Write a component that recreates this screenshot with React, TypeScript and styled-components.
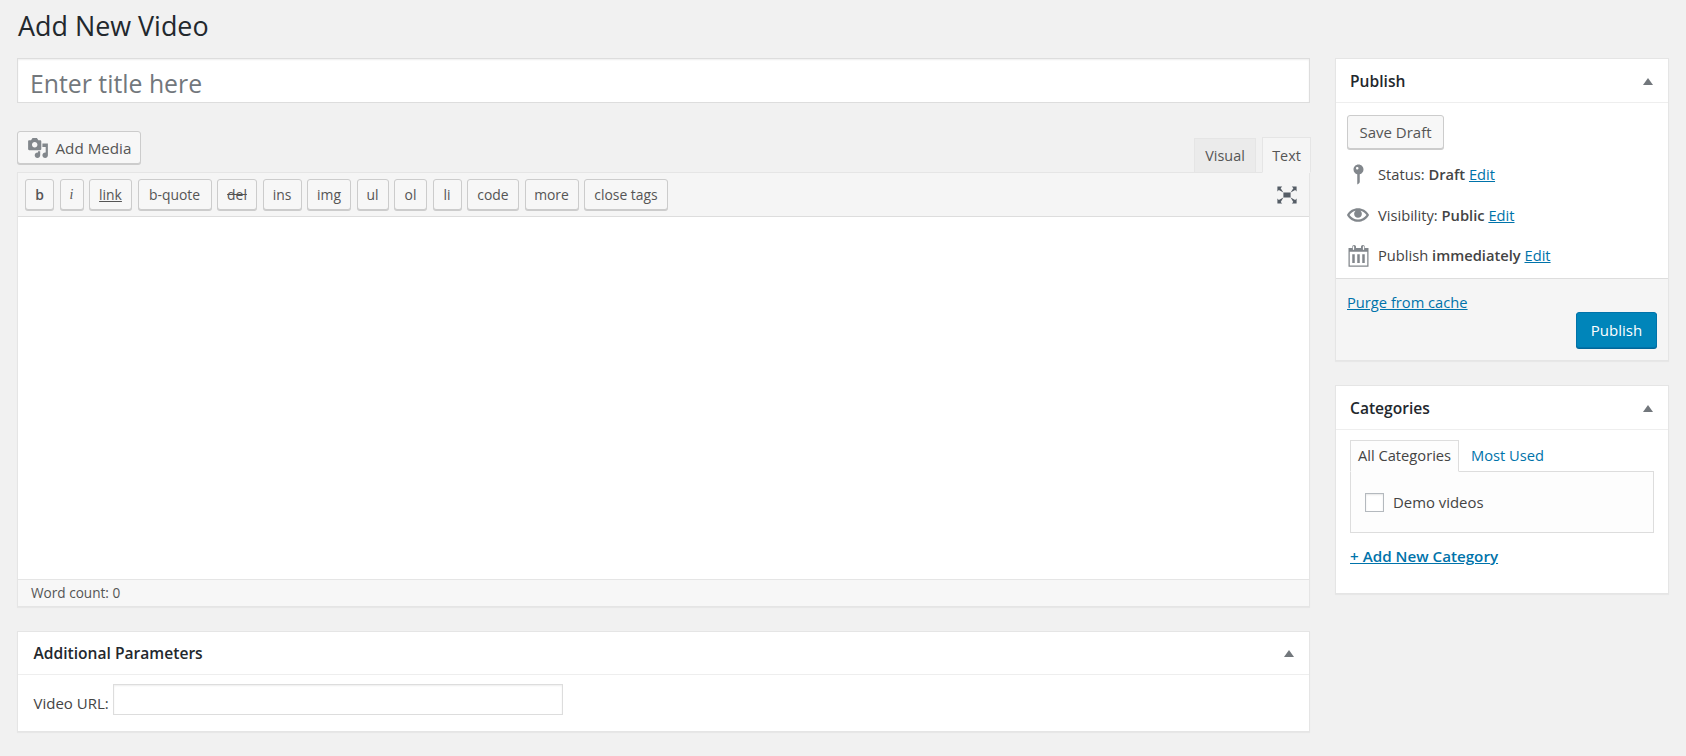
import React from "react";
import styled, { createGlobalStyle } from "styled-components";

const Global = createGlobalStyle`
  html, body { margin: 0; padding: 0; background: #f1f1f1; }
  body { font-family: "Open Sans", "Liberation Sans", sans-serif; font-size: 14.7px; color: #444; }
  * { box-sizing: border-box; }
`;

const Page = styled.div`
  width: 1686px;
  height: 756px;
  padding: 0 17px;
  overflow: hidden;
`;
const Heading = styled.h1`
  margin: 0;
  height: 58px;
  padding: 8px 0 0 1px;
  font-size: 26.9px;
  line-height: 36px;
  font-weight: 400;
  color: #23282d;
`;
const Columns = styled.div`
  display: grid;
  grid-template-columns: 1293px 334px;
  column-gap: 25px;
  align-items: start;
`;
const MainCol = styled.div`
  display: flex;
  flex-direction: column;
`;
const SideCol = styled.div`
  display: flex;
  flex-direction: column;
  gap: 24px;
`;
const TitleField = styled.div`
  height: 45px;
  background: #fff;
  border: 1px solid #ddd;
  padding-left: 12px;
  font-size: 24.8px;
  line-height: 48px;
  color: #72777c;
  box-shadow: inset 0 1px 2px rgba(0,0,0,.07);
`;
const EditorTools = styled.div`
  height: 69px;
  display: flex;
  justify-content: space-between;
  align-items: flex-end;
`;
const MediaButton = styled.div`
  width: 124px;
  height: 33px;
  margin-bottom: 8px;
  display: flex;
  align-items: center;
  gap: 6.5px;
  padding-left: 9px;
  background: #f7f7f7;
  border: 1px solid #ccc;
  border-radius: 3px;
  box-shadow: 0 1px 0 #ccc;
  color: #555;
  font-size: 15.2px;
`;
const Tabs = styled.div`
  display: flex;
  gap: 6px;
  margin-right: -1px;
  margin-bottom: -1px;
  position: relative;
  z-index: 1;
`;
const Tab = styled.div<{ $active?: boolean; $w: number }>`
  width: ${p => p.$w}px;
  height: ${p => (p.$active ? 36 : 35)}px;
  margin-top: ${p => (p.$active ? 0 : 1)}px;
  display: flex;
  align-items: center;
  justify-content: center;
  font-size: 14.4px;
  color: #555;
  background: ${p => (p.$active ? "#f5f5f5" : "#ebebeb")};
  border: 1px solid #e5e5e5;
  border-bottom-color: ${p => (p.$active ? "#f5f5f5" : "#e5e5e5")};
`;
const Editor = styled.div`
  border: 1px solid #e5e5e5;
  box-shadow: 0 1px 1px rgba(0,0,0,.04);
`;
const Toolbar = styled.div`
  height: 44px;
  display: flex;
  align-items: flex-start;
  gap: 5.5px;
  padding: 6px 7px 0;
  background: #f5f5f5;
  border-bottom: 1px solid #ddd;
  position: relative;
`;
const ToolButton = styled.div<{ $w: number }>`
  width: ${p => p.$w}px;
  height: 31px;
  display: flex;
  align-items: center;
  justify-content: center;
  background: #f7f7f7;
  border: 1px solid #ccc;
  border-radius: 3px;
  box-shadow: 0 1px 0 #ccc;
  font-size: 13.9px;
  color: #555;
`;
const Bold = styled.span`font-weight: 600;`;
const Italic = styled.span`font-style: italic; font-family: "Liberation Serif", serif;`;
const Under = styled.span`text-decoration: underline;`;
const Strike = styled.span`text-decoration: line-through;`;
const FullScreen = styled.span`
  position: absolute;
  right: 10px;
  top: 10px;
  width: 24px;
  height: 24px;
  color: #555d66;
`;
const EditorBody = styled.div`
  height: 362px;
  background: #fff;
`;
const WordCount = styled.div`
  height: 27px;
  padding: 0 0 2px 13px;
  display: flex;
  align-items: center;
  font-size: 13.6px;
  color: #555;
  background: #f7f7f7;
  border-top: 1px solid #e5e5e5;
`;
const Box = styled.section<{ $h?: number }>`
  background: #fff;
  border: 1px solid #e5e5e5;
  box-shadow: 0 1px 1px rgba(0,0,0,.04);
  ${p => (p.$h ? `height: ${p.$h}px;` : "")}
  display: flex;
  flex-direction: column;
`;
const BottomBox = styled(Box)`
  margin-top: 24px;
`;
const BoxHead = styled.header<{ $pad?: number; $h?: number }>`
  height: ${p => p.$h ?? 44}px;
  flex: none;
  display: flex;
  align-items: center;
  justify-content: space-between;
  padding: 0 15px 0 ${p => p.$pad ?? 14}px;
  border-bottom: 1px solid #eee;
`;
const BoxTitle = styled.h2`
  margin: 0;
  font-size: 15.6px;
  font-weight: 600;
  color: #23282d;
`;
const Caret = styled.span`
  width: 0;
  height: 0;
  margin-top: 1px;
  border-left: 5px solid transparent;
  border-right: 5px solid transparent;
  border-bottom: 7px solid #72777c;
`;
const UrlRow = styled.div`
  display: flex;
  align-items: flex-start;
  gap: 4px;
  padding: 9px 0 0 15.5px;
`;
const UrlLabel = styled.label`
  width: 75.5px;
  white-space: nowrap;
  font-size: 15px;
  line-height: 22px;
  padding-top: 8px;
`;
const UrlInput = styled.div`
  width: 450px;
  height: 31px;
  background: #fff;
  border: 1px solid #ddd;
  box-shadow: inset 0 1px 2px rgba(0,0,0,.07);
`;
const PublishBody = styled.div`
  height: 175px;
  padding: 12px 11px 0;
  display: flex;
  flex-direction: column;
`;
const SaveDraft = styled.div`
  width: 97px;
  height: 34px;
  display: flex;
  align-items: center;
  justify-content: center;
  background: #f7f7f7;
  border: 1px solid #ccc;
  border-radius: 3px;
  box-shadow: 0 1px 0 #ccc;
  color: #555;
  font-size: 15px;
`;
const Meta = styled.div<{ $top: number }>`
  margin-top: ${p => p.$top}px;
  height: 22px;
  display: flex;
  align-items: center;
  gap: 9px;
  b { font-weight: 600; }
`;
const MetaIcon = styled.span`
  flex: none;
  width: 22px;
  height: 22px;
  display: flex;
  align-items: center;
  justify-content: center;
  color: #82878c;
  svg { flex: none; }
`;
const A = styled.a`
  color: #0073aa;
  text-decoration: underline;
`;
const PurgeLink = styled(A)`
  display: block;
  line-height: 20px;
`;
const PublishFooter = styled.div`
  height: 82px;
  background: #f5f5f5;
  border-top: 1px solid #ddd;
  padding: 13px 11px 0;
  display: flex;
  flex-direction: column;
`;
const PublishButton = styled.div`
  align-self: flex-end;
  width: 81px;
  height: 36px;
  display: flex;
  align-items: center;
  justify-content: center;
  background: #0085ba;
  border: 1px solid #0073aa;
  border-radius: 3px;
  box-shadow: 0 1px 0 #006799;
  color: #fff;
  font-size: 15px;
`;
const CatBody = styled.div`
  padding: 10px 14px 0;
  height: 163px;
`;
const CatTabs = styled.div`
  display: flex;
  height: 32px;
  position: relative;
  z-index: 1;
`;
const CatTab = styled.div<{ $active?: boolean }>`
  height: 32px;
  padding-bottom: 2px;
  display: flex;
  align-items: center;
  ${p => p.$active
    ? `width: 109px; justify-content: center; background: #fdfdfd; border: 1px solid #ddd; border-bottom-color: #fdfdfd; color: #444;`
    : `margin-left: 12px; color: #0073aa;`}
`;
const CatPanel = styled.div`
  margin-top: -1px;
  width: 304px;
  height: 62px;
  background: #fdfdfd;
  border: 1px solid #ddd;
  display: flex;
  align-items: center;
  padding: 0 0 0 14px;
  gap: 9px;
  font-size: 14.9px;
`;
const Check = styled.span`
  width: 19px;
  height: 19px;
  background: #fff;
  border: 1px solid #b4b9be;
  box-shadow: inset 0 1px 2px rgba(0,0,0,.1);
`;
const AddCat = styled(A)`
  display: block;
  margin-top: 12px;
  line-height: 22px;
  font-weight: 600;
  font-size: 15.2px;
`;

const App = () => {
  const tools: [number, React.ReactNode][] = [
    [29, <Bold>b</Bold>],
    [24, <Italic>i</Italic>],
    [43, <Under>link</Under>],
    [74, "b-quote"],
    [40, <Strike>del</Strike>],
    [39, "ins"],
    [44, "img"],
    [32, "ul"],
    [33, "ol"],
    [29, "li"],
    [52, "code"],
    [54, "more"],
    [84, "close tags"],
  ];
  return (
    <Page>
      <Global />
      <Heading>Add New Video</Heading>
      <Columns>
        <MainCol>
          <TitleField>Enter title here</TitleField>
          <EditorTools>
            <MediaButton>
              <svg width="22" height="22" viewBox="0 0 20 20" fill="#82878c"><path d="M13 11V4c0-.55-.45-1-1-1h-1.67L9 1H5L3.67 3H2c-.55 0-1 .45-1 1v7c0 .55.45 1 1 1h10c.55 0 1-.45 1-1zM7 4.5c1.38 0 2.5 1.12 2.5 2.5S8.38 9.5 7 9.5 4.5 8.38 4.5 7 5.62 4.5 7 4.5zM14 6h5v10.5c0 1.38-1.12 2.5-2.5 2.5S14 17.88 14 16.5s1.12-2.5 2.5-2.5c.17 0 .34.02.5.05V9h-3V6zm-4 8.05V13h2v3.5c0 1.38-1.12 2.5-2.5 2.5S7 17.88 7 16.5 8.12 14 9.5 14c.17 0 .34.02.5.05z"/></svg>
              Add Media
            </MediaButton>
            <Tabs>
              <Tab $w={62}>Visual</Tab>
              <Tab $w={49} $active>Text</Tab>
            </Tabs>
          </EditorTools>
          <Editor>
            <Toolbar>
              {tools.map(([w, c], i) => <ToolButton key={i} $w={w}>{c}</ToolButton>)}
              <FullScreen>
                <svg width="24" height="24" viewBox="0 0 20 20" fill="currentColor"><path d="M7 8h6v4H7zm-5 5v4h4l-1.2-1.2L7 12l-3.8 2.2M14 17h4v-4l-1.2 1.2L13 12l2.2 3.8M14 3l1.3 1.3L13 8l3.8-2.2L18 7V3M6 3H2v4l1.2-1.2L7 8 4.7 4.3"/></svg>
              </FullScreen>
            </Toolbar>
            <EditorBody />
            <WordCount>Word count: 0</WordCount>
          </Editor>
          <BottomBox $h={101}>
            <BoxHead $pad={15.5} $h={43}><BoxTitle>Additional Parameters</BoxTitle><Caret /></BoxHead>
            <UrlRow>
              <UrlLabel>Video URL:</UrlLabel>
              <UrlInput />
            </UrlRow>
          </BottomBox>
        </MainCol>
        <SideCol>
          <Box>
            <BoxHead><BoxTitle>Publish</BoxTitle><Caret /></BoxHead>
            <PublishBody>
              <SaveDraft>Save Draft</SaveDraft>
              <Meta $top={14}>
                <MetaIcon><svg width="25" height="25" viewBox="0 0 20 20" fill="currentColor"><path d="M14 6c0 1.86-1.28 3.41-3 3.86V16c0 1-2 2-2 2V9.86c-1.72-.45-3-2-3-3.86 0-2.21 1.79-4 4-4s4 1.79 4 4zM8 5c0 .55.45 1 1 1s1-.45 1-1-.45-1-1-1-1 .45-1 1z"/></svg></MetaIcon>
                <span>Status: <b>Draft</b> <A>Edit</A></span>
              </Meta>
              <Meta $top={19}>
                <MetaIcon><svg width="22" height="22" viewBox="0 0 20 20" fill="currentColor"><path d="M19.7 9.4C17.7 6 14 3.9 10 3.9S2.3 6 .3 9.4L0 10l.3.6c2 3.4 5.7 5.5 9.7 5.5s7.7-2.1 9.7-5.5l.3-.6-.3-.6zM10 14.1c-3.1 0-6-1.6-7.7-4.1C3.6 8 5.7 6.6 8 6.1c-.9.6-1.5 1.7-1.5 2.9 0 1.9 1.6 3.5 3.5 3.5s3.5-1.6 3.5-3.5c0-1.2-.6-2.3-1.5-2.9 2.3.5 4.4 1.9 5.7 3.9-1.7 2.5-4.6 4.1-7.7 4.1z"/></svg></MetaIcon>
                <span>Visibility: <b>Public</b> <A>Edit</A></span>
              </Meta>
              <Meta $top={18}>
                <MetaIcon><svg width="25" height="25" viewBox="0 0 20 20" fill="currentColor"><path d="M15 4h3v15H2V4h3V3c0-.41.15-.76.44-1.06.29-.29.65-.44 1.06-.44s.77.15 1.06.44c.29.3.44.65.44 1.06v1h4V3c0-.41.15-.76.44-1.06.29-.29.65-.44 1.06-.44s.77.15 1.06.44c.29.3.44.65.44 1.06v1zM6 5.5c.41 0 .5-.09.5-.5V3c0-.41-.09-.5-.5-.5s-.5.09-.5.5v2c0 .41.09.5.5.5zm8 0c.41 0 .5-.09.5-.5V3c0-.41-.09-.5-.5-.5s-.5.09-.5.5v2c0 .41.09.5.5.5zM17 18V7H3v11h14zM7 9v7H5V9h2zm4 0v7H9V9h2zm4 0v7h-2V9h2z"/></svg></MetaIcon>
                <span>Publish <b>immediately</b> <A>Edit</A></span>
              </Meta>
            </PublishBody>
            <PublishFooter>
              <PurgeLink>Purge from cache</PurgeLink>
              <PublishButton>Publish</PublishButton>
            </PublishFooter>
          </Box>
          <Box>
            <BoxHead><BoxTitle>Categories</BoxTitle><Caret /></BoxHead>
            <CatBody>
              <CatTabs>
                <CatTab $active>All Categories</CatTab>
                <CatTab>Most Used</CatTab>
              </CatTabs>
              <CatPanel><Check />Demo videos</CatPanel>
              <AddCat>+ Add New Category</AddCat>
            </CatBody>
          </Box>
        </SideCol>
      </Columns>
    </Page>
  );
};

export default App;
